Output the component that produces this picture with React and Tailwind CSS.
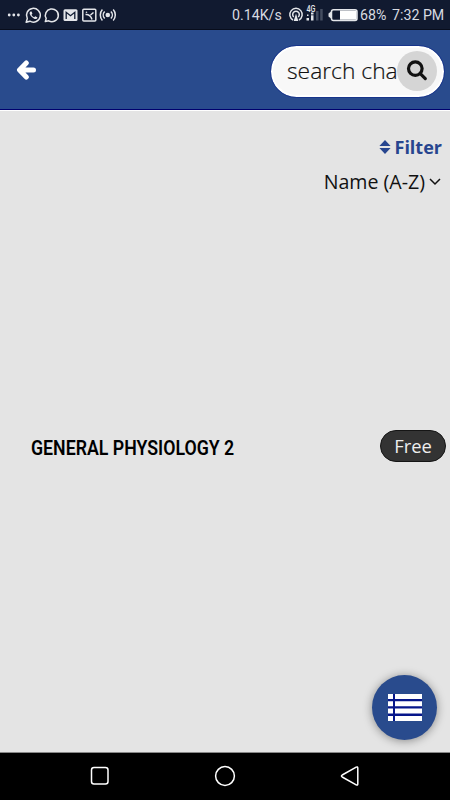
import React from "react";

const StatusIcons = () => (
  <svg width="112" height="18" viewBox="0 0 112 18" fill="none" stroke="#e4e6ea" strokeWidth="1.5">
    {/* More dots */}
    <g fill="#e4e6ea" stroke="none">
      <circle cx="2.2" cy="9" r="1.4" />
      <circle cx="6.8" cy="9" r="1.4" />
      <circle cx="11.4" cy="9" r="1.4" />
    </g>
    {/* WhatsApp */}
    <path d="M19.2 16.3l1.1-3.8a6.9 6.9 0 1 1 2.6 2.7z" strokeLinejoin="round" />
    <path
      d="M23.6 5.4c-1 .7-1.2 1.9-.6 3.2 1 2 2.5 3.5 4.6 4.4 1.3.4 2.5-.2 2.9-1.5l-2.2-1.3-1.2 1.1c-1.2-.5-2.1-1.500-2.600-2.500l.9-1.100-.8-2.200z"
      fill="#e4e6ea"
      stroke="none"
    />
    {/* Chat bubble */}
    <path d="M38.3 15.6l.9-3.200a6.500 6.300 0 1 1 2.500 2.400z" strokeLinejoin="round" />
    {/* Gmail */}
    <rect x="56.500" y="3.300" width="14" height="11.700" rx="1.500" fill="#e4e6ea" stroke="none" />
    <path d="M59.200 13V6.300l4.300 3.400 4.300-3.400V13" stroke="#111c33" strokeWidth="1.300" />
    {/* Picture */}
    <rect x="75.800" y="3.200" width="13" height="11.800" rx="1" />
    <path d="M78.500 8.500c3-.5 5.800 2 6.500 5M83.500 9l3-2.500" />
    <circle cx="79.500" cy="6.300" r=".8" fill="#e4e6ea" stroke="none" />
    {/* Hotspot */}
    <circle cx="100.800" cy="9" r="2.300" fill="#e4e6ea" stroke="none" />
    <path d="M97.700 5.500a5 5 0 0 0 0 7M103.900 5.500a5 5 0 0 1 0 7M95.400 3.600a8 8 0 0 0 0 10.800M106.200 3.600a8 8 0 0 1 0 10.800" />
  </svg>
);

const SignalIcons = () => (
  <svg width="71" height="22" viewBox="0 0 71 22" fill="none" stroke="#e4e6ea" strokeWidth="1.5">
    <path d="M6 16a6.200 6.200 0 1 1 6 0M6.800 13a3.300 3.300 0 1 1 4.400 0" />
    <path d="M9 9.500l-2.300 7.400h4.600z" fill="#e4e6ea" stroke="none" />
    <text x="19.500" y="7.500" fill="#e4e6ea" stroke="none" textLength="9" lengthAdjust="spacingAndGlyphs" className="font-['Roboto'] text-[8.5px] font-medium">
      4G
    </text>
    <g stroke="none" fill="#e4e6ea">
      <rect x="19.500" y="14" width="2.500" height="2.500" />
      <rect x="20" y="10.500" width="1.500" height="1.500" />
      <rect x="24" y="8.500" width="2.500" height="2" />
      <rect x="24" y="11.300" width="2.500" height="5.200" />
      <rect x="29" y="7" width="2.500" height="9.500" fill="#444d60" />
      <rect x="33.200" y="5" width="2.500" height="11.500" fill="#444d60" />
    </g>
    <rect x="44.500" y="5.800" width="25.500" height="10.600" rx="2" />
    <path d="M41.500 9.500l2.500-2v7l-2.500-2z" fill="#e4e6ea" stroke="none" />
    <rect x="53" y="6.500" width="16.500" height="9.200" fill="#fff" stroke="none" />
  </svg>
);

const StatusBar = () => (
  <div className="flex h-[30px] items-center border-b border-[#080d1c] bg-[#111a30] pl-[7px] font-['Roboto',sans-serif] text-[14.2px] text-[#d8dbe1]">
    <StatusIcons />
    <span className="ml-[113px] mt-0.5 w-[55px] whitespace-nowrap">0.14K/s</span>
    <SignalIcons />
    <span className="ml-[2px] mt-0.5 w-[32px] whitespace-nowrap">68%</span>
    <span className="mt-0.5 whitespace-nowrap">7:32 PM</span>
  </div>
);

const Header = () => (
  <header className="flex h-20 items-center justify-between border-b border-[#00006e] bg-[#294b8d] pl-4 pr-[6px]">
    <button aria-label="Back">
      <svg width="20" height="20" viewBox="0 0 20 20" fill="none" stroke="#fff" strokeWidth="5" strokeLinecap="round" strokeLinejoin="round">
        <path d="M10.300 3L3.500 10l6.800 7M5 10h12.500" />
      </svg>
    </button>
    <div className="mt-[3px] flex h-[51px] w-[173px] items-center rounded-full border-2 border-white bg-[#f8f8f8] pl-[14px] pr-[5px] outline outline-[#0c248a]/60">
      <span className="w-[110px] whitespace-nowrap text-[22.8px] font-light leading-8 text-[#111] [-webkit-text-stroke:0.2px_#111]">
        search cha
      </span>
      <button aria-label="Search" className="relative flex size-10 shrink-0 items-center justify-center rounded-full bg-[#d5d5d5]">
        <svg width="22" height="22" viewBox="0 0 22 22" fill="none" stroke="#111" strokeWidth="3.2" strokeLinecap="round">
          <circle cx="9.300" cy="8.600" r="6.800" />
          <path d="M14.300 13.600l5 5" />
        </svg>
      </button>
    </div>
  </header>
);

const App = () => {
  return (
    <div className="flex h-[800px] w-[450px] flex-col overflow-hidden bg-[#e4e4e4] font-['Open_Sans',sans-serif]">
      <StatusBar />
      <Header />

      <main className="relative flex flex-1 flex-col border-t border-white">
        {/* Sorting */}
        <div className="flex h-[71px] items-center justify-end gap-1 pr-2 text-lg font-bold text-[#27458f]">
          <svg width="12" height="14" viewBox="0 0 12 14" fill="currentColor">
            <path d="M6 0l5.600 6H.4zM6 14L.4 8h11.200z" />
          </svg>
          Filter
        </div>
        <div className="-mt-[14px] flex h-7 items-center justify-end gap-1 pr-[9px] text-[19.6px] text-[#111]">
          Name (A-Z)
          <svg width="12" height="8" viewBox="0 0 12 8" fill="none" stroke="#111" strokeWidth="1.5">
            <path d="M1 1l5 5 5-5" />
          </svg>
        </div>

        {/* Chapter row */}
        <div className="mt-[234px] flex h-8 items-center justify-between pl-[31px] pr-1">
          <h2 className="mt-[5px] origin-left scale-x-[.845] whitespace-nowrap font-['Roboto',sans-serif] text-[21px] font-semibold text-black">
            GENERAL PHYSIOLOGY 2
          </h2>
          <span className="flex h-8 w-[66px] items-center justify-center rounded-full border border-[#151515] bg-[#333] text-[18.4px] text-[#eee]">
            Free
          </span>
        </div>

        <button
          aria-label="Chapter list"
          className="absolute bottom-3 right-[13px] flex size-[65px] items-center justify-center rounded-full bg-[#294b8d] shadow-[0_1px_10px_rgba(0,0,0,0.4)]"
        >
          <svg width="34" height="28" viewBox="0 0 34 28">
            <path d="M0 0h34v27H0z" fill="#06168a" />
            <path
              d="M0 0h5v5H0zM7 0h27v5H7zM0 7.300h5v5H0zM7 7.300h27v5H7zM0 14.500h5v5H0zM7 14.500h27v5H7zM0 22h5v5H0zM7 22h27v5H7z"
              fill="#fff"
            />
          </svg>
        </button>
      </main>

      {/* Navigation bar */}
      <nav className="flex h-12 items-center justify-between border-t border-[#888] bg-black pb-[2px] pl-[90px] pr-[90px]">
        <svg width="20" height="20" viewBox="0 0 20 20" fill="none" stroke="#fff" strokeWidth="1.5">
          <rect x="1.500" y="1.500" width="16.500" height="16.500" rx="2.500" />
        </svg>
        <svg width="22" height="22" viewBox="0 0 22 22" fill="none" stroke="#fff" strokeWidth="1.5">
          <circle cx="11" cy="11" r="9.400" />
        </svg>
        <svg width="20" height="20" viewBox="0 0 20 20" fill="none" stroke="#fff" strokeWidth="1.5" strokeLinejoin="round">
          <path d="M16.200 1.200Q17.800.3 17.800 2.200v15.600q0 1.900-1.600 1L2.200 11q-1.500-1 0-2z" />
        </svg>
      </nav>
    </div>
  );
};

export default App;
